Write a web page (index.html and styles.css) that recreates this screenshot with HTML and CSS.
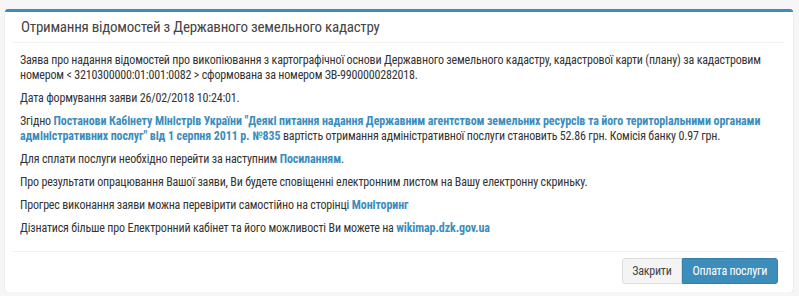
FILE: index.html
```html
<!DOCTYPE html>
<html lang="uk">
<head>
    <meta charset="UTF-8">
    <title>Отримання відомостей</title>
    <link rel="stylesheet" href="styles.css">
</head>
<body>
    <div class="box">
        <div class="box-header">
            <h3 class="box-title">Отримання відомостей з Державного земельного кадастру</h3>
        </div>
        <div class="box-body">
            <p>Заява про надання відомостей про викопіювання з картографічної основи Державного земельного кадастру, кадастрової карти (плану) за кадастровим номером &lt; 3210300000:01:001:0082 &gt; сформована за номером ЗВ-9900000282018.</p>
            <p>Дата формування заяви 26/02/2018 10:24:01.</p>
            <p>Згідно <a href="#" class="link">Постанови Кабінету Міністрів України "Деякі питання надання Державним агентством земельних ресурсів та його територіальними органами адміністративних послуг" від 1 серпня 2011 р. №835</a> вартість отримання адміністративної послуги становить 52.86 грн. Комісія банку 0.97 грн.</p>
            <p>Для сплати послуги необхідно перейти за наступним <a href="#" class="link">Посиланням</a>.</p>
            <p>Про результати опрацювання Вашої заяви, Ви будете сповіщенні електронним листом на Вашу електронну скриньку.</p>
            <p>Прогрес виконання заяви можна перевірити самостійно на сторінці <a href="#" class="link">Моніторинг</a></p>
            <p>Дізнатися більше про Електронний кабінет та його можливості Ви можете на <a href="#" class="link">wikimap.dzk.gov.ua</a></p>
        </div>
        <div class="box-footer">
            <button class="btn btn-default">Закрити</button>
            <button class="btn btn-primary">Оплата послуги</button>
        </div>
    </div>
</body>
</html>
```

FILE: styles.css
```css
body {
    margin: 0;
    padding: 9px 6px 0 5px;
    background-color: #f6f6f6;
    font-family: 'Roboto Condensed', 'Roboto', sans-serif;
    font-size: 12px;
    letter-spacing: -0.18px;
    color: #333;
}

.box {
    background-color: #fff;
    border-top: 3px solid #3c8dbc;
    border-radius: 3px;
    box-shadow: 0 1px 2px rgba(0, 0, 0, 0.12);
    padding: 0 8px;
}

.box-header {
    padding: 5px 8px 5px;
    border-bottom: 1px solid #f2f2f2;
}

.box-title {
    margin: 0;
    font-size: 15px;
    font-weight: normal;
    line-height: 20px;
    letter-spacing: -0.25px;
    color: #444;
}

.box-body {
    padding: 10px 7px 7px;
}

.box-body p {
    margin: 0 0 8px;
    line-height: 15px;
}

.link {
    color: #3c8dbc;
    font-weight: bold;
    letter-spacing: -0.1px;
    text-decoration: none;
}

.box-footer {
    display: flex;
    justify-content: flex-end;
    padding: 6px 7px 8px 0;
    border-top: 1px solid #f2f2f2;
}

.btn {
    font-family: inherit;
    font-size: 12px;
    letter-spacing: -0.25px;
    height: 26px;
    padding: 0 10px;
    cursor: pointer;
}

.btn-default {
    background-color: #f4f4f4;
    border: 1px solid #ddd;
    color: #444;
    padding: 0 9px;
    border-radius: 3px 0 0 3px;
}

.btn-primary {
    background-color: #3c8dbc;
    border: 1px solid #367fa9;
    color: #fff;
    border-radius: 0 3px 3px 0;
}
```
